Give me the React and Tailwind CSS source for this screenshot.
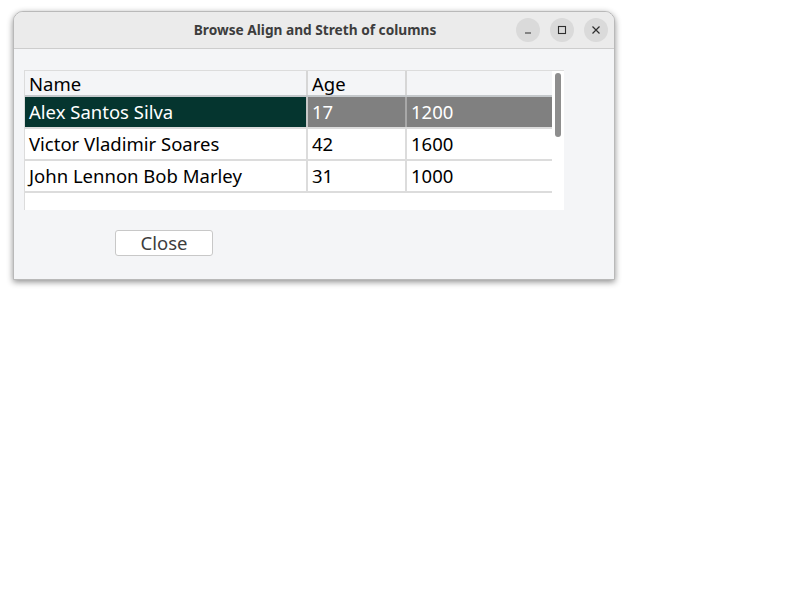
const rows = [
  { name: 'Alex Santos Silva', age: '17', value: '1200', selected: true },
  { name: 'Victor Vladimir Soares', age: '42', value: '1600' },
  { name: 'John Lennon Bob Marley', age: '31', value: '1000' },
];

const TitleButton = ({ children }) => (
  <div className="w-6 h-6 rounded-full bg-[#dadada] flex items-center justify-center text-[#2e2e2e]">
    {children}
  </div>
);

const App = () => {
  const font = { fontFamily: '"Noto Sans", "Open Sans", sans-serif' };

  return (
    <div className="w-[800px] h-[600px] bg-white pt-[11px] pl-[13px]" style={font}>
      <div className="w-[602px] h-[269px] rounded-t-[10px] border border-[#b9b9b9] bg-[#f4f5f7] shadow-[0_2px_6px_rgba(0,0,0,0.45)] overflow-hidden flex flex-col">
        {/* title bar */}
        <div className="h-[37px] shrink-0 bg-[#ebebeb] border-b border-[#cdcdcd] flex items-center relative">
          <div className="flex-1 text-center text-[13.7px] font-bold text-[#3d3d3d] pl-[2px]">
            Browse Align and Streth of columns
          </div>
          <div className="absolute right-[6px] top-[6px] flex gap-[10px]">
            <TitleButton>
              <svg width="10" height="10" viewBox="0 0 10 10"><path d="M2 8h6" stroke="currentColor" strokeWidth="1.2" /></svg>
            </TitleButton>
            <TitleButton>
              <svg width="10" height="10" viewBox="0 0 10 10"><rect x="1.5" y="1.5" width="7" height="7" fill="none" stroke="currentColor" strokeWidth="1.1" /></svg>
            </TitleButton>
            <TitleButton>
              <svg width="10" height="10" viewBox="0 0 10 10"><path d="M1.5 1.5l7 7M8.5 1.5l-7 7" stroke="currentColor" strokeWidth="1.2" /></svg>
            </TitleButton>
          </div>
        </div>

        {/* body */}
        <div className="flex-1 pt-[21px] pl-[10px]">
          <div className="w-[540px] h-[140px] bg-white border-l border-t border-[#dcdcdc] flex text-[18.5px] text-black">
            <div className="w-[528px] flex flex-col">
              {/* header */}
              <div className="h-[26px] bg-[#f4f5f7] flex border-b-2 border-[#c4c8cb]">
                <div className="w-[283px] pl-[4px] leading-[26px] border-r-2 border-[#d6d6d6]">Name</div>
                <div className="w-[99px] pl-[4px] leading-[26px] border-r-2 border-[#d6d6d6]">Age</div>
                <div className="flex-1" />
              </div>
              {rows.map((r) => (
                <div key={r.name} className="h-[32px] flex border-b-2 border-[#dcdcdc]">
                  <div className={`w-[283px] pl-[4px] leading-[30px] border-r-2 ${r.selected ? 'bg-[#05352f] text-white border-[#c8c8c8]' : 'border-[#dcdcdc]'}`}>{r.name}</div>
                  <div className={`w-[99px] pl-[4px] leading-[30px] border-r-2 ${r.selected ? 'bg-[#808080] text-white border-[#a8a8a8]' : 'border-[#dcdcdc]'}`}>{r.age}</div>
                  <div className={`flex-1 pl-[4px] leading-[30px] ${r.selected ? 'bg-[#808080] text-white' : ''}`}>{r.value}</div>
                </div>
              ))}
            </div>
            {/* scrollbar */}
            <div className="w-[12px] pt-[2px] pl-[3px]">
              <div className="w-[6px] h-[64px] rounded-full bg-[#8e8e8e]" />
            </div>
          </div>

          <div className="pl-[91px] pt-[20px]">
            <button className="w-[98px] h-[26px] rounded-[3px] border border-[#c8c8c8] bg-white text-[18.5px] text-[#3d3d3d] leading-[24px]">
              Close
            </button>
          </div>
        </div>
      </div>
    </div>
  );
};

export default App;
